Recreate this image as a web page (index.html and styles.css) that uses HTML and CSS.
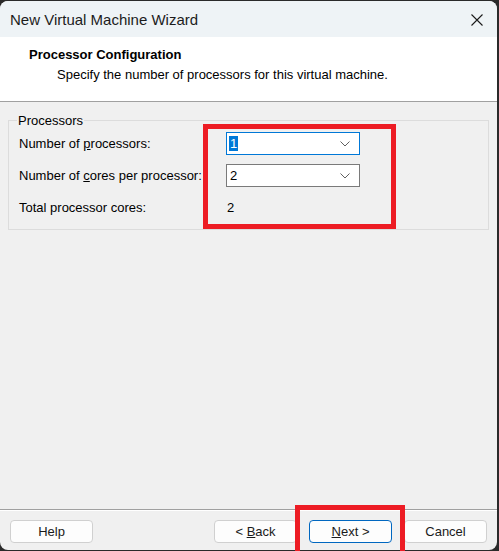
FILE: index.html
```html
<!DOCTYPE html>
<html>
<head>
<meta charset="utf-8">
<link rel="stylesheet" href="styles.css">
</head>
<body>
<div class="window">
  <div class="titlebar">
    <span class="title">New Virtual Machine Wizard</span>
    <svg class="close" width="12" height="12" viewBox="0 0 12 12"><path d="M0.5 0.5 L11.5 11.5 M11.5 0.5 L0.5 11.5" stroke="#1b1b1b" stroke-width="1.1" fill="none"/></svg>
  </div>
  <div class="header">
    <div class="h-title">Processor Configuration</div>
    <div class="h-sub">Specify the number of processors for this virtual machine.</div>
  </div>
  <div class="content">
    <fieldset class="group">
      <legend>Processors</legend>
      <div class="grid">
        <div class="label">Number of <u>p</u>rocessors:</div>
        <div class="combo focused"><span class="sel">1</span><svg class="chev" width="10" height="6" viewBox="0 0 10 6"><path d="M0.5 0.5 L5 5 L9.5 0.5" stroke="#606060" fill="none"/></svg></div>
        <div class="label">Number of <u>c</u>ores per processor:</div>
        <div class="combo"><span>2</span><svg class="chev" width="10" height="6" viewBox="0 0 10 6"><path d="M0.5 0.5 L5 5 L9.5 0.5" stroke="#606060" fill="none"/></svg></div>
        <div class="label">Total processor cores:</div>
        <div class="value">2</div>
      </div>
    </fieldset>
  </div>
  <div class="footer">
    <button class="btn">Help</button>
    <div class="spacer"></div>
    <button class="btn">&lt; <u>B</u>ack</button>
    <button class="btn primary"><u>N</u>ext &gt;</button>
    <button class="btn">Cancel</button>
  </div>
</div>
<div class="mark mark-combos"></div>
<div class="mark mark-next"></div>
</body>
</html>
```

FILE: styles.css
```css
html, body {
  margin: 0;
  padding: 0;
}
body {
  width: 499px;
  height: 551px;
  background: #2a2a2a;
  overflow: hidden;
  position: relative;
  font-family: "Segoe UI", "Liberation Sans", Arial, sans-serif;
  font-size: 13px;
  color: #1a1a1a;
}
.window {
  margin-top: 1px;
  width: 497px;
  height: 549px;
  border-radius: 8px;
  overflow: hidden;
  background: #f0f0f0;
  display: flex;
  flex-direction: column;
}
.titlebar {
  height: 36px;
  flex: none;
  background: #eef3f6;
  display: flex;
  align-items: center;
  justify-content: space-between;
  padding: 0 14px 0 10px;
}
.title {
  font-size: 15px;
  color: #1c1c1c;
}
.close {
  display: block;
  margin-top: 1px;
}
.header {
  flex: none;
  background: #ffffff;
  border-bottom: 1px solid #a0a0a0;
  padding: 10px 0 0 29px;
  box-sizing: border-box;
  height: 65px;
}
.h-title {
  font-weight: bold;
  font-size: 13px;
  line-height: 16px;
  color: #000;
}
.h-sub {
  margin-top: 4px;
  margin-left: 28px;
  line-height: 16px;
  color: #000;
}
.content {
  flex: 1;
  padding: 11px 8px 0 8px;
  border-bottom: 1px solid #a0a0a0;
}
.group {
  margin: 0;
  border: 1px solid #dcdcdc;
  padding: 4px 10px 10px 10px;
}
.group legend {
  padding: 0 1px;
  margin-left: -2px;
  line-height: 15px;
  color: #000;
}
.grid {
  display: grid;
  grid-template-columns: 207px 134px;
  grid-template-rows: 23px 23px 23px;
  row-gap: 9px;
  align-items: center;
}
.label {
  color: #000;
  white-space: nowrap;
}
.combo {
  height: 23px;
  box-sizing: border-box;
  background: #fff;
  border: 1px solid #7a7a7a;
  display: flex;
  align-items: center;
  justify-content: space-between;
  padding: 0 9px 0 2px;
  color: #000;
}
.combo.focused {
  border-color: #0078d7;
}
.combo span {
  line-height: 15px;
  padding: 0 1px;
}
.combo .sel {
  background: #0078d7;
  color: #fff;
}
.chev {
  display: block;
}
.value {
  padding-left: 1px;
  color: #000;
}
.footer {
  flex: none;
  height: 40px;
  box-sizing: border-box;
  border-top: 1px solid #ffffff;
  display: flex;
  align-items: flex-start;
  padding: 9px 10px 0 10px;
  gap: 12px;
}
.spacer {
  flex: 1;
}
.btn {
  width: 83px;
  height: 23px;
  box-sizing: border-box;
  background: #fdfdfd;
  border: 1px solid #d0d0d0;
  border-radius: 4px;
  font-family: inherit;
  font-size: 13px;
  color: #1a1a1a;
  padding: 0;
}
.btn.primary {
  border-color: #0067c0;
}
.mark {
  position: absolute;
  border: 5px solid #ed1c24;
  box-sizing: border-box;
}
.mark-combos {
  left: 203px;
  top: 124px;
  width: 193px;
  height: 105px;
}
.mark-next {
  left: 295px;
  top: 505px;
  width: 110px;
  height: 60px;
}
```
